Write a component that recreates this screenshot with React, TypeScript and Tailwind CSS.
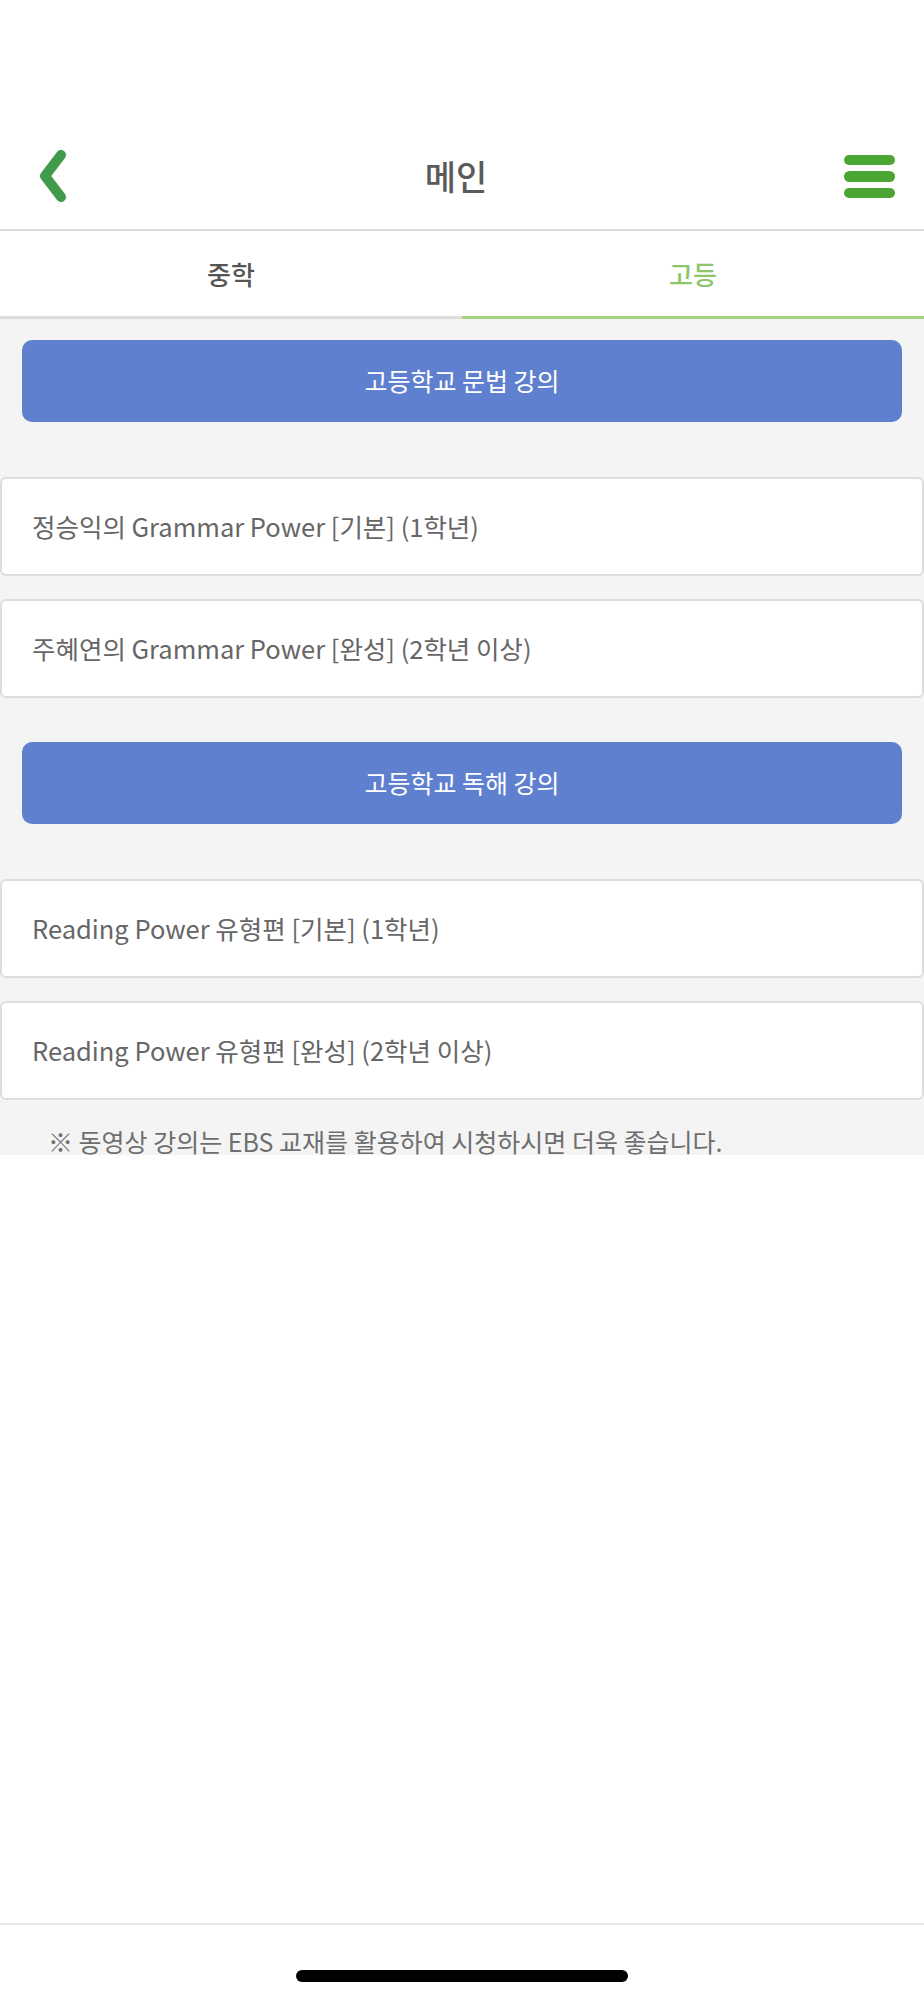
const lectures = [
  {
    title: "고등학교 문법 강의",
    items: ["정승익의 Grammar Power [기본] (1학년)", "주혜연의 Grammar Power [완성] (2학년 이상)"],
  },
  {
    title: "고등학교 독해 강의",
    items: ["Reading Power 유형편 [기본] (1학년)", "Reading Power 유형편 [완성] (2학년 이상)"],
  },
];

function BackIcon() {
  return (
    <svg width="32" height="52" viewBox="0 0 32 52" fill="none">
      <path d="M25 5 L9 26 L25 47" stroke="#3f9a4a" strokeWidth="10" strokeLinecap="round" strokeLinejoin="round" />
    </svg>
  );
}

function MenuIcon() {
  return (
    <div className="flex w-[51px] flex-col gap-[6px]">
      <span className="block h-[10px] rounded-full bg-[#4aa532]" />
      <span className="block h-[11px] rounded-full bg-[#4aa532]" />
      <span className="block h-[10px] rounded-full bg-[#4aa532]" />
    </div>
  );
}

export default function App() {
  return (
    <div
      className="relative flex min-h-[2000px] w-[924px] flex-col bg-white"
      style={{ fontFamily: '"Noto Sans CJK KR", "Noto Sans", sans-serif' }}
    >
      <div className="h-[123px]" />

      <header className="flex h-[106px] items-center justify-between pl-[36px] pr-[29px]">
        <button className="flex items-center">
          <BackIcon />
        </button>
        <h1 className="text-[34px] font-medium leading-none text-[#5a5a5a]">메인</h1>
        <button className="flex items-center">
          <MenuIcon />
        </button>
      </header>
      <div className="h-[2px] bg-[#dddddd]" />

      <nav className="flex h-[88px]">
        <div className="flex flex-1 flex-col">
          <div className="flex flex-1 items-center justify-center text-[26px] font-medium text-[#555555]">중학</div>
          <div className="h-[3px] bg-[#dddddd]" />
        </div>
        <div className="flex flex-1 flex-col">
          <div className="flex flex-1 items-center justify-center text-[26px] font-medium text-[#8dc56a]">고등</div>
          <div className="h-[3px] bg-[#a6d37e]" />
        </div>
      </nav>

      <main className="h-[836px] overflow-hidden bg-[#f4f4f4] pt-[21px]">
        {lectures.map((group, gi) => (
          <section key={group.title} className={gi > 0 ? "mt-[44px]" : ""}>
            <div className="mx-[22px] flex h-[82px] items-center justify-center rounded-[10px] bg-[#5f7fcf] text-[25px] text-white">
              {group.title}
            </div>
            <ul className="mt-[55px] flex flex-col gap-[23px]">
              {group.items.map((item) => (
                <li
                  key={item}
                  className="flex h-[99px] items-center rounded-[6px] border-2 border-[#dddddd] bg-white pl-[30px] text-[25.5px] text-[#666666]"
                >
                  {item}
                </li>
              ))}
            </ul>
          </section>
        ))}
        <p className="mt-[23px] pl-[48px] text-[25px] leading-[36px] text-[#6e6e6e]">
          ※ 동영상 강의는 EBS 교재를 활용하여 시청하시면 더욱 좋습니다.
        </p>
      </main>

      <div className="flex-1" />
      <div className="h-[2px] bg-[#e8e8e8]" />
      <div className="flex h-[75px] justify-center pt-[45px]">
        <div className="h-[12px] w-[332px] rounded-full bg-black" />
      </div>
    </div>
  );
}
